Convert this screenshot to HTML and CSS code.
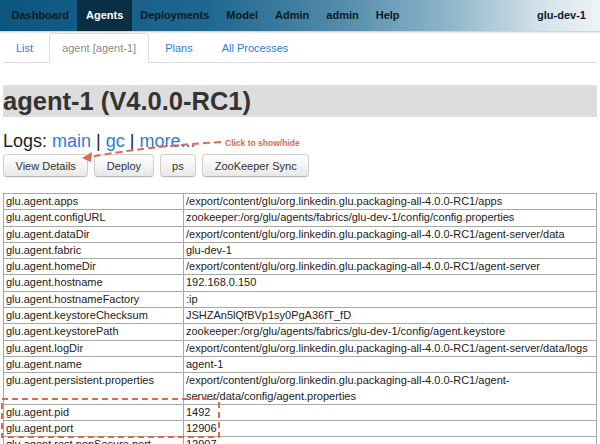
FILE: index.html
```html
<!DOCTYPE html>
<html>
<head>
<meta charset="utf-8">
<link rel="stylesheet" href="styles.css">
</head>
<body>
<div class="navbar">
  <ul class="nav-items">
    <li class="nav-item">Dashboard</li>
    <li class="nav-item active">Agents</li>
    <li class="nav-item">Deployments</li>
    <li class="nav-item">Model</li>
    <li class="nav-item">Admin</li>
    <li class="nav-item">admin</li>
    <li class="nav-item">Help</li>
  </ul>
  <div class="fabric">glu-dev-1</div>
</div>
<div class="page">
  <ul class="tabs">
    <li class="tab"><a>List</a></li>
    <li class="tab active"><a>agent [agent-1]</a></li>
    <li class="tab"><a>Plans</a></li>
    <li class="tab"><a>All Processes</a></li>
  </ul>
  <h1 class="title">agent-1 (V4.0.0-RC1)</h1>
  <div class="logs">Logs: <a>main</a> | <a>gc</a> | <a>more...</a></div>
  <div class="buttons">
    <button class="btn">View Details</button>
    <button class="btn">Deploy</button>
    <button class="btn">ps</button>
    <button class="btn">ZooKeeper Sync</button>
  </div>
  <table class="details">
    <tr><td class="key">glu.agent.apps</td><td>/export/content/glu/org.linkedin.glu.packaging-all-4.0.0-RC1/apps</td></tr>
    <tr><td class="key">glu.agent.configURL</td><td>zookeeper:/org/glu/agents/fabrics/glu-dev-1/config/config.properties</td></tr>
    <tr><td class="key">glu.agent.dataDir</td><td>/export/content/glu/org.linkedin.glu.packaging-all-4.0.0-RC1/agent-server/data</td></tr>
    <tr><td class="key">glu.agent.fabric</td><td>glu-dev-1</td></tr>
    <tr><td class="key">glu.agent.homeDir</td><td>/export/content/glu/org.linkedin.glu.packaging-all-4.0.0-RC1/agent-server</td></tr>
    <tr><td class="key">glu.agent.hostname</td><td>192.168.0.150</td></tr>
    <tr><td class="key">glu.agent.hostnameFactory</td><td>:ip</td></tr>
    <tr><td class="key">glu.agent.keystoreChecksum</td><td>JSHZAn5lQfBVp1sy0PgA36fT_fD</td></tr>
    <tr><td class="key">glu.agent.keystorePath</td><td>zookeeper:/org/glu/agents/fabrics/glu-dev-1/config/agent.keystore</td></tr>
    <tr><td class="key">glu.agent.logDir</td><td>/export/content/glu/org.linkedin.glu.packaging-all-4.0.0-RC1/agent-server/data/logs</td></tr>
    <tr><td class="key">glu.agent.name</td><td>agent-1</td></tr>
    <tr><td class="key">glu.agent.persistent.properties</td><td>/export/content/glu/org.linkedin.glu.packaging-all-4.0.0-RC1/agent-<br>server/data/config/agent.properties</td></tr>
    <tr><td class="key">glu.agent.pid</td><td>1492</td></tr>
    <tr><td class="key">glu.agent.port</td><td>12906</td></tr>
    <tr><td class="key">glu.agent.rest.nonSecure.port</td><td>12907</td></tr>
  </table>
</div>
<div class="callout">Click to show/hide</div>
<svg class="annotations" width="600" height="444" viewBox="0 0 600 444">
  <path d="M221 142 Q150 146 90 157" fill="none" stroke="#e2674f" stroke-width="2" stroke-dasharray="7 4"/>
  <path d="M82 158 L92 152 L91 162 Z" fill="#e2674f"/>
  <rect x="2" y="399" width="217" height="38" fill="none" stroke="#e2674f" stroke-width="2" stroke-dasharray="6 4"/>
</svg>
</body>
</html>
```
FILE: styles.css
```css
* { box-sizing: border-box; }
html, body { margin: 0; padding: 0; background: #fff; }
body {
  font-family: "Liberation Sans", Arial, Helvetica, sans-serif;
  color: #222;
  position: relative;
  width: 600px;
  height: 444px;
  overflow: hidden;
}
.navbar {
  height: 32px;
  display: flex;
  align-items: stretch;
  justify-content: space-between;
  padding-left: 3px;
  background: linear-gradient(to right, #0b557e 0%, #1f6890 35%, #4d88a8 55%, #8fb6ca 75%, #d2e2ea 90%, #eef3f6 100%);
  border-bottom: 1px solid #cdd6db;
  box-shadow: 0 1px 1px rgba(0,0,0,0.08);
}
.nav-items {
  display: flex;
  list-style: none;
  margin: 0;
  padding: 0;
}
.nav-item {
  padding: 0 8.5px;
  font-size: 11px;
  font-weight: bold;
  color: #0d1a22;
  line-height: 31px;
}
.nav-item.active {
  background: #0a2e44;
  color: #fff;
}
.fabric {
  font-size: 11px;
  font-weight: bold;
  color: #0d1a22;
  line-height: 31px;
  padding-right: 14px;
}
.page { padding: 0 3px; }
.tabs {
  display: flex;
  list-style: none;
  margin: 1px 0 0;
  padding: 0;
  border-bottom: 1px solid #ddd;
  height: 30px;
}
.tab {
  margin-right: 3px;
  margin-bottom: -1px;
  border: 1px solid transparent;
  border-radius: 4px 4px 0 0;
  padding: 0 12px;
  font-size: 11px;
  line-height: 28px;
}
.tab a { color: #2f7bd9; }
.tab.active {
  border-color: #ddd #ddd #fff;
  background: #fff;
}
.tab.active a { color: #8a8a8a; }
.title {
  margin: 22px 0 0;
  background: #dddddd;
  height: 32px;
  line-height: 32px;
  font-size: 25.5px;
  font-weight: bold;
  color: #333;
}
.logs {
  margin-top: 14px;
  font-size: 18px;
  line-height: 20px;
  color: #222;
}
.logs a { color: #2f7bd9; }
.buttons {
  display: flex;
  gap: 6px;
  margin-top: 3px;
}
.btn {
  height: 23px;
  padding: 0 11.5px;
  font-family: "Liberation Sans", Arial, sans-serif;
  font-size: 11px;
  color: #333;
  background: linear-gradient(#ffffff, #e8e8e8);
  border: 1px solid #cfcfcf;
  border-bottom-color: #b8b8b8;
  border-radius: 4px;
  box-shadow: 0 1px 1px rgba(0,0,0,0.06);
}
.details {
  margin-top: 16px;
  width: 594px;
  border-collapse: collapse;
  border: 1px solid #a8a8a8;
  font-size: 11px;
  color: #222;
}
.details td {
  border: 1px solid #a8a8a8;
  padding: 0 2px;
  line-height: 15.3px;
  white-space: nowrap;
  vertical-align: top;
}
.details td.key { width: 180px; }
.callout {
  position: absolute;
  left: 225px;
  top: 138px;
  font-size: 8.5px;
  font-weight: bold;
  color: #e2674f;
}
.annotations {
  position: absolute;
  left: 0;
  top: 0;
  pointer-events: none;
}
```
